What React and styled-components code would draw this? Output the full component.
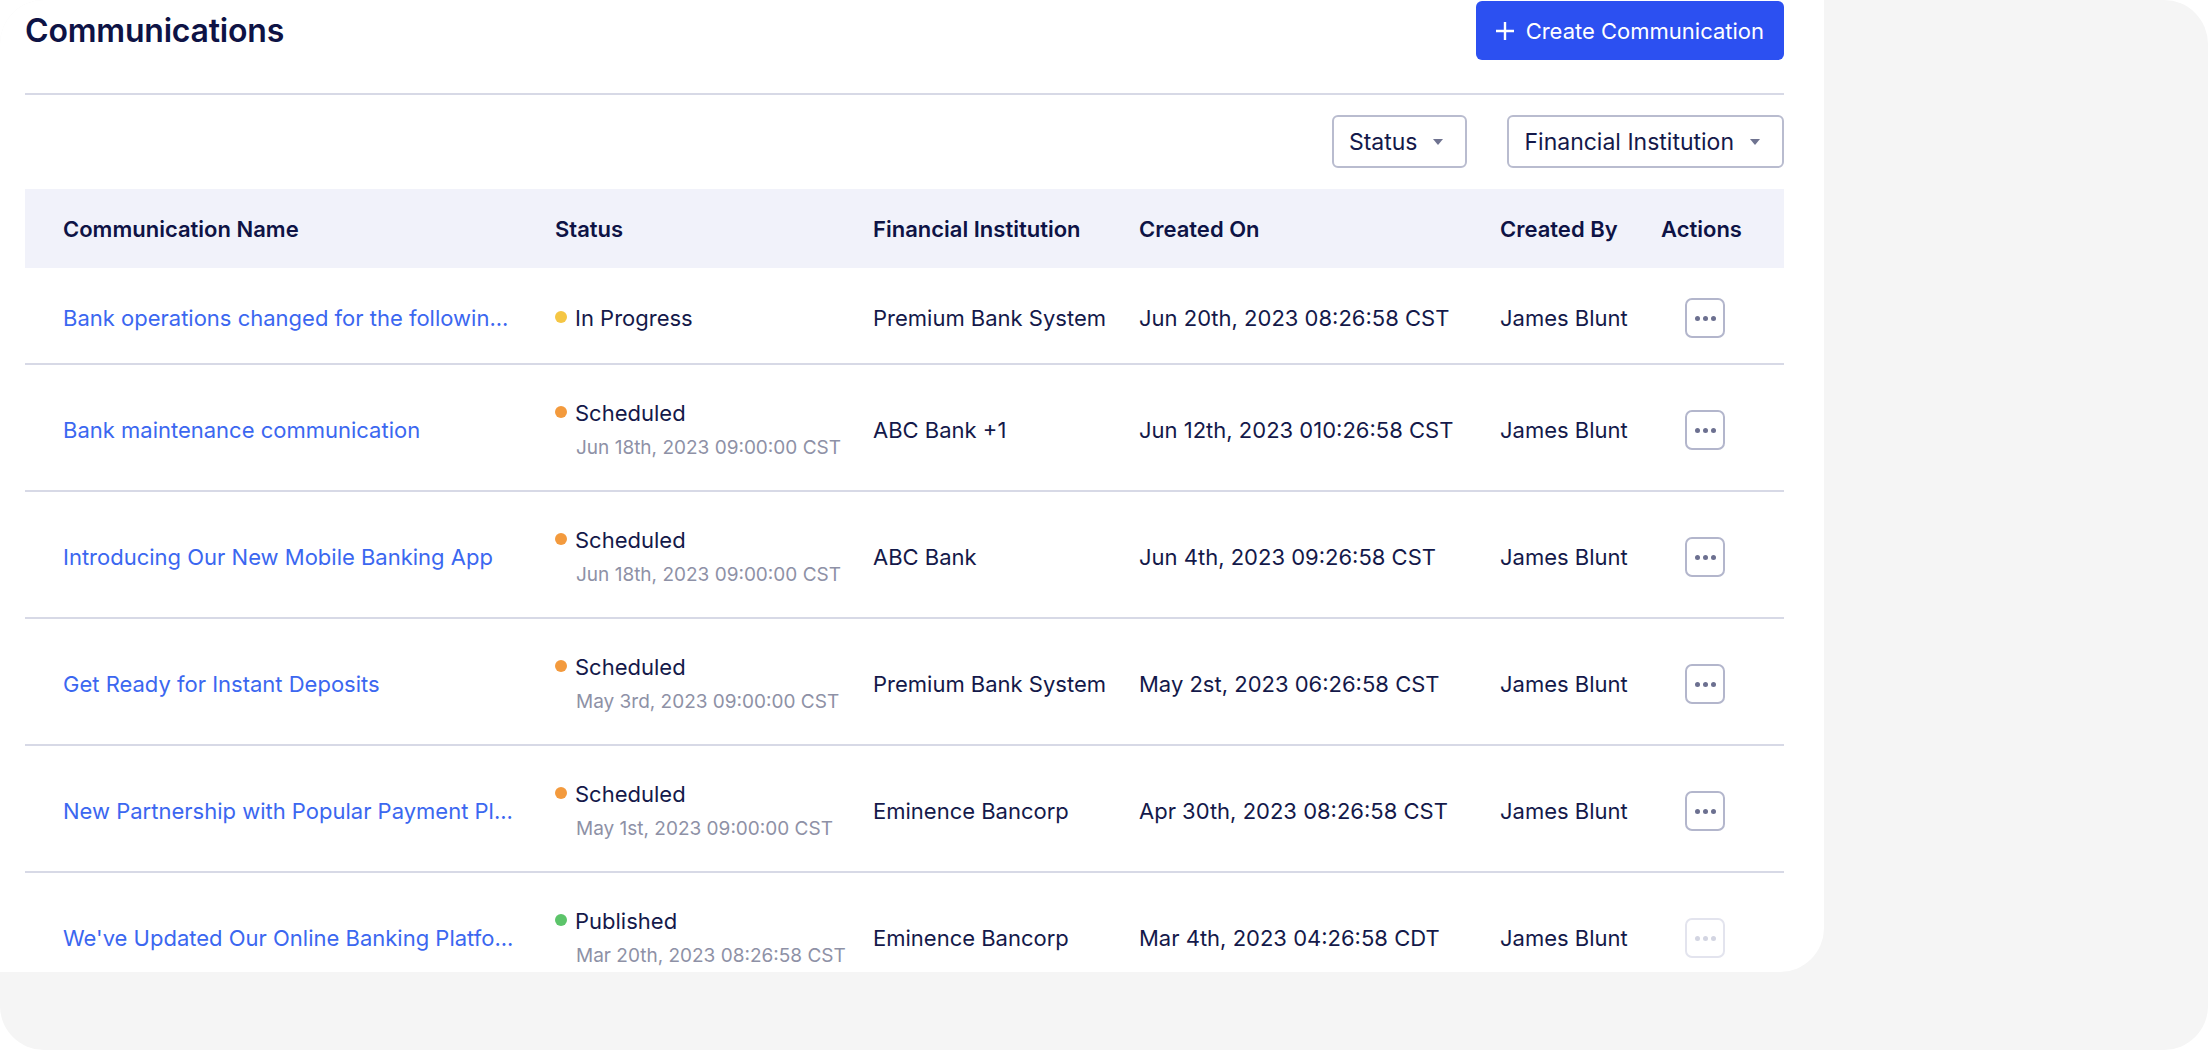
import React from 'react';
import styled, { createGlobalStyle } from 'styled-components';

const GlobalStyle = createGlobalStyle`
  html, body {
    margin: 0;
    padding: 0;
    background: #ffffff;
  }
  body {
    font-family: Inter, "Noto Sans", sans-serif;
    color: #14194a;
  }
  * {
    box-sizing: border-box;
  }
`;

const Frame = styled.div`
  width: 2208px;
  height: 1050px;
  background: #f5f5f5;
  border-radius: 44px;
  overflow: hidden;
`;

const Panel = styled.div`
  width: 1824px;
  height: 972px;
  background: #ffffff;
  border-bottom-right-radius: 44px;
  overflow: hidden;
  padding-left: 25px;
`;

const Content = styled.div`
  width: 1759px;
`;

const Header = styled.div`
  display: flex;
  align-items: center;
  justify-content: space-between;
  height: 95px;
  padding: 1px 0 33px;
  border-bottom: 2px solid #d7d9e6;
`;

const Title = styled.h1`
  margin: 0;
  font-size: 32px;
  font-weight: 600;
  color: #0e1345;
  letter-spacing: -0.2px;
`;

const PrimaryButton = styled.button`
  display: flex;
  align-items: center;
  gap: 11px;
  height: 59px;
  padding: 0 20px 0 19px;
  border: none;
  border-radius: 6px;
  background: #2c50f1;
  color: #ffffff;
  font-family: inherit;
  font-size: 22px;
  font-weight: 400;
  cursor: pointer;
`;

const Filters = styled.div`
  display: flex;
  justify-content: flex-end;
  gap: 40px;
  margin-top: 20px;
`;

const FilterButton = styled.button`
  display: flex;
  align-items: center;
  gap: 16px;
  height: 53px;
  padding: 0 22px 0 15px;
  border: 2px solid #b9bccf;
  border-radius: 6px;
  background: #ffffff;
  color: #14194a;
  font-family: inherit;
  font-size: 23px;
  cursor: pointer;
`;

const Caret = styled.span`
  width: 0;
  height: 0;
  border-left: 5px solid transparent;
  border-right: 5px solid transparent;
  border-top: 6px solid #6f7390;
`;

const Table = styled.div`
  margin-top: 21px;
`;

const columns = '492px 318px 266px 361px 161px 1fr';

const HeadRow = styled.div`
  display: grid;
  grid-template-columns: ${columns};
  align-items: center;
  height: 79px;
  padding-left: 38px;
  background: #f1f2fa;
`;

const HeadCell = styled.div`
  font-size: 22px;
  font-weight: 600;
  color: #0e1345;
  white-space: nowrap;
`;

const Row = styled.div`
  display: grid;
  grid-template-columns: ${columns};
  align-items: center;
  min-height: 97px;
  padding: 34px 0 29px 38px;
  border-bottom: ${p => (p.last ? 'none' : '2px solid #d7d9e6')};
`;

const Cell = styled.div`
  font-size: 22px;
  line-height: 28px;
  color: #14194a;
  white-space: nowrap;
`;

const NameLink = styled.a`
  display: block;
  max-width: 462px;
  overflow: hidden;
  text-overflow: ellipsis;
  white-space: nowrap;
  font-size: 22px;
  line-height: 28px;
  color: #3b67f0;
  text-decoration: none;
  cursor: pointer;
`;

const StatusBlock = styled.div`
  display: flex;
  flex-direction: column;
`;

const StatusLine = styled.div`
  display: flex;
  align-items: center;
  gap: 8px;
  font-size: 22px;
  line-height: 28px;
  color: #14194a;
`;

const Dot = styled.span`
  flex: none;
  width: 12px;
  height: 12px;
  margin-top: -3px;
  border-radius: 50%;
  background: ${p => p.color};
`;

const SubDate = styled.div`
  margin-top: 8px;
  padding-left: 21px;
  font-size: 19px;
  line-height: 26px;
  color: #8e91a6;
  white-space: nowrap;
`;

const ActionCell = styled.div`
  display: flex;
  align-items: center;
  height: 28px;
`;

const ActionButton = styled.button`
  display: flex;
  align-items: center;
  justify-content: center;
  gap: 3px;
  flex: none;
  width: 40px;
  height: 40px;
  margin-left: 24px;
  padding: 0;
  border: 2px solid ${p => (p.faded ? '#e3e4ee' : '#b3b6cc')};
  border-radius: 7px;
  background: #ffffff;
  cursor: pointer;

  span {
    width: 5px;
    height: 5px;
    border-radius: 50%;
    background: ${p => (p.faded ? '#d3d5e2' : '#6c7090')};
  }
`;

const statusColors = {
  'In Progress': '#f5c644',
  Scheduled: '#f39a3d',
  Published: '#5cc46a',
};

const rows = [
  {
    name: 'Bank operations changed for the followin...',
    status: 'In Progress',
    institution: 'Premium Bank System',
    createdOn: 'Jun 20th, 2023 08:26:58 CST',
  },
  {
    name: 'Bank maintenance communication',
    status: 'Scheduled',
    date: 'Jun 18th, 2023 09:00:00 CST',
    institution: 'ABC Bank +1',
    createdOn: 'Jun 12th, 2023 010:26:58 CST',
  },
  {
    name: 'Introducing Our New Mobile Banking App',
    status: 'Scheduled',
    date: 'Jun 18th, 2023 09:00:00 CST',
    institution: 'ABC Bank',
    createdOn: 'Jun 4th, 2023 09:26:58 CST',
  },
  {
    name: 'Get Ready for Instant Deposits',
    status: 'Scheduled',
    date: 'May 3rd, 2023 09:00:00 CST',
    institution: 'Premium Bank System',
    createdOn: 'May 2st, 2023 06:26:58 CST',
  },
  {
    name: 'New Partnership with Popular Payment Pl...',
    status: 'Scheduled',
    date: 'May 1st, 2023 09:00:00 CST',
    institution: 'Eminence Bancorp',
    createdOn: 'Apr 30th, 2023 08:26:58 CST',
  },
  {
    name: "We've Updated Our Online Banking Platfo...",
    status: 'Published',
    date: 'Mar 20th, 2023 08:26:58 CST',
    institution: 'Eminence Bancorp',
    createdOn: 'Mar 4th, 2023 04:26:58 CDT',
  },
];

const PlusIcon = () => (
  <svg width="20" height="20" viewBox="0 0 20 20" fill="none">
    <path d="M10 1v18M1 10h18" stroke="#ffffff" strokeWidth="2.4" />
  </svg>
);

const App = () => (
  <>
    <GlobalStyle />
    <Frame>
      <Panel>
        <Content>
          <Header>
            <Title>Communications</Title>
            <PrimaryButton>
              <PlusIcon />
              Create Communication
            </PrimaryButton>
          </Header>

          <Filters>
            <FilterButton>
              Status
              <Caret />
            </FilterButton>
            <FilterButton>
              Financial Institution
              <Caret />
            </FilterButton>
          </Filters>

          <Table>
            <HeadRow>
              <HeadCell>Communication Name</HeadCell>
              <HeadCell>Status</HeadCell>
              <HeadCell>Financial Institution</HeadCell>
              <HeadCell>Created On</HeadCell>
              <HeadCell>Created By</HeadCell>
              <HeadCell>Actions</HeadCell>
            </HeadRow>
            {rows.map((row, index) => (
              <Row key={index} last={index === rows.length - 1}>
                <NameLink>{row.name}</NameLink>
                <StatusBlock>
                  <StatusLine>
                    <Dot color={statusColors[row.status]} />
                    {row.status}
                  </StatusLine>
                  {row.date && <SubDate>{row.date}</SubDate>}
                </StatusBlock>
                <Cell>{row.institution}</Cell>
                <Cell>{row.createdOn}</Cell>
                <Cell>James Blunt</Cell>
                <ActionCell>
                  <ActionButton faded={index === rows.length - 1}>
                    <span />
                    <span />
                    <span />
                  </ActionButton>
                </ActionCell>
              </Row>
            ))}
          </Table>
        </Content>
      </Panel>
    </Frame>
  </>
);

export default App;
